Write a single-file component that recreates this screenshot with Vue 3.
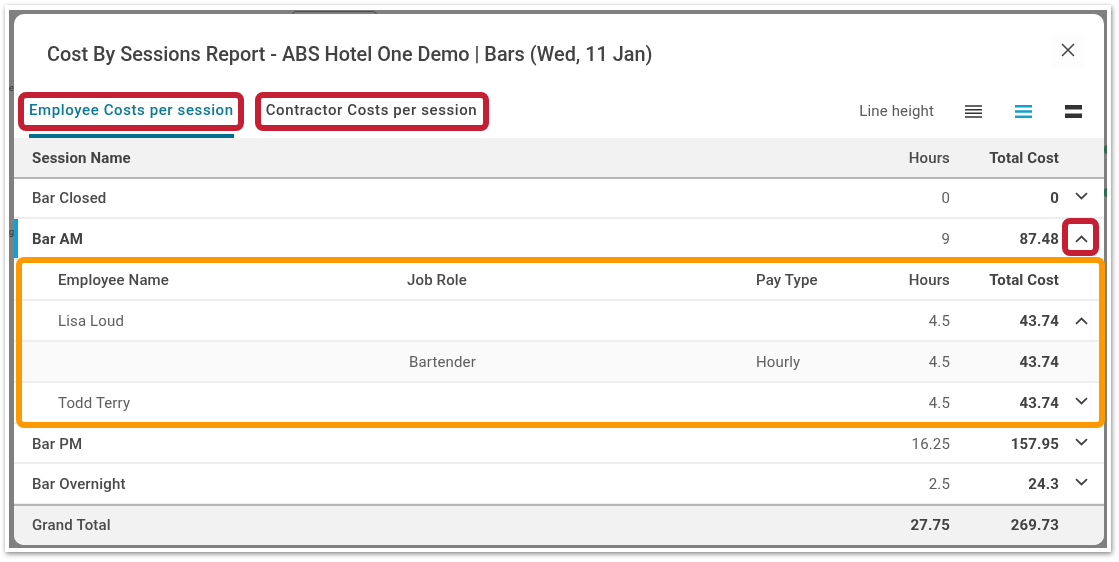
<script setup>
const subRows = [
  { name: 'Lisa Loud', role: '', pay: '', hours: '4.5', cost: '43.74', icon: 'up' },
  { name: '', role: 'Bartender', pay: 'Hourly', hours: '4.5', cost: '43.74', icon: '', shaded: true },
  { name: 'Todd Terry', role: '', pay: '', hours: '4.5', cost: '43.74', icon: 'down' }
]
const after = [
  { name: 'Bar PM', hours: '16.25', cost: '157.95', cls: 'short' },
  { name: 'Bar Overnight', hours: '2.5', cost: '24.3', cls: 'low' }
]
</script>

<template>
  <div class="page">
    <div class="card">
      <div class="shot">
        <div class="backdrop">
          <span class="ghost ghost-e">e</span>
          <span class="ghost ghost-g">g</span>
          <span class="ghost-pill"></span>
          <span class="arc arc-a"></span>
          <span class="arc arc-b"></span>
          <section class="modal">
            <header class="head">
              <h1>Cost By Sessions Report - ABS Hotel One Demo | Bars (Wed, 11 Jan)</h1>
              <button class="close" aria-label="Close">
                <svg width="14" height="14" viewBox="0 0 14 14"><path d="M1 1 13 13M13 1 1 13" stroke="#424242" stroke-width="1.5" fill="none"/></svg>
              </button>
            </header>

            <div class="tabs">
              <div class="tab active">Employee Costs per session</div>
              <div class="tab">Contractor Costs per session</div>
              <div class="line-height">
                <span class="lh-label">Line height</span>
                <svg width="17" height="13" viewBox="0 0 17 13"><path d="M0 1h17M0 4.700h17M0 8.300h17M0 12h17" stroke="#333" stroke-width="1.500"/></svg>
                <svg width="17" height="13" viewBox="0 0 17 13"><path d="M0 1.300h17M0 6.500h17M0 11.700h17" stroke="#12a0d2" stroke-width="2.600"/></svg>
                <svg width="17" height="13" viewBox="0 0 17 13"><path d="M0 2.200h17M0 10.800h17" stroke="#333" stroke-width="4.400"/></svg>
              </div>
            </div>

            <div class="row main head-row">
              <span class="strong">Session Name</span>
              <span class="num medium">Hours</span>
              <span class="num strong">Total Cost</span>
              <span></span>
            </div>

            <div class="row main first">
              <span class="medium">Bar Closed</span>
              <span class="num light">0</span>
              <span class="num strong">0</span>
              <svg class="chev" viewBox="0 0 13 8"><path d="M1 1.200 6.500 6.500 12 1.200" /></svg>
            </div>

            <div class="row main open">
              <span class="strong">Bar AM</span>
              <span class="num light">9</span>
              <span class="num strong">87.48</span>
              <svg class="chev up" viewBox="0 0 13 8"><path d="M1 6.800 6.500 1.500 12 6.800" /></svg>
            </div>

            <div class="row sub">
              <span class="medium">Employee Name</span>
              <span class="medium">Job Role</span>
              <span class="medium">Pay Type</span>
              <span class="num medium">Hours</span>
              <span class="num strong">Total Cost</span>
              <span></span>
            </div>

            <div v-for="(r, i) in subRows" :key="i" class="row sub" :class="{ shaded: r.shaded }">
              <span class="light">{{ r.name }}</span>
              <span class="light role">{{ r.role }}</span>
              <span class="light">{{ r.pay }}</span>
              <span class="num light">{{ r.hours }}</span>
              <span class="num strong">{{ r.cost }}</span>
              <svg v-if="r.icon === 'up'" class="chev up" viewBox="0 0 13 8"><path d="M1 6.800 6.500 1.500 12 6.800" /></svg>
              <svg v-else-if="r.icon === 'down'" class="chev" viewBox="0 0 13 8"><path d="M1 1.200 6.500 6.500 12 1.200" /></svg>
              <span v-else></span>
            </div>

            <div v-for="r in after" :key="r.name" class="row main" :class="r.cls">
              <span class="medium">{{ r.name }}</span>
              <span class="num light">{{ r.hours }}</span>
              <span class="num strong">{{ r.cost }}</span>
              <svg class="chev" viewBox="0 0 13 8"><path d="M1 1.200 6.500 6.500 12 1.200" /></svg>
            </div>

            <div class="row main total">
              <span class="medium">Grand Total</span>
              <span class="num strong">27.75</span>
              <span class="num strong">269.73</span>
              <span></span>
            </div>
          </section>
        </div>
        <i class="mark red mark-tab1"></i>
        <i class="mark red mark-tab2"></i>
        <i class="mark red mark-chev"></i>
        <i class="mark orange mark-sub"></i>
      </div>
    </div>
  </div>
</template>

<style>
html, body { margin: 0; background: #fff; }
</style>

<style scoped>
.page {
  width: 1119px;
  height: 562px;
  overflow: hidden;
  box-sizing: border-box;
  padding: 5px 0 0 5px;
  font-family: Roboto, "Liberation Sans", sans-serif;
  color: #424242;
}
.card {
  width: 1106px;
  height: 547px;
  box-sizing: border-box;
  padding: 5px 4px 4px;
  background: #fff;
  box-shadow: 1px 2px 5px rgba(0, 0, 0, .45), 0 0 3px rgba(0, 0, 0, .08);
  filter: blur(.35px);
}
.shot { position: relative; width: 1098px; height: 538px; }
.backdrop {
  position: relative;
  height: 100%;
  box-sizing: border-box;
  padding: 4px 3px 3px 5px;
  background: #808080;
  overflow: hidden;
}
.ghost { position: absolute; left: 0; font-size: 9px; line-height: 10px; color: #303030; }
.ghost-e { top: 73px; }
.ghost-g { top: 217px; }
.ghost-pill {
  position: absolute; left: 283px; top: 1px; width: 85px; height: 6px;
  border: 1px solid #4c4c4c; border-radius: 4px 4px 0 0; box-sizing: border-box;
}
.arc { position: absolute; right: 0; width: 3px; height: 9px; background: #2f6b4c; border-radius: 3px 0 0 3px; }
.arc-a { top: 135px; }
.arc-b { top: 178px; }
.modal {
  position: relative;
  height: 531px;
  background: #fff;
  border-radius: 10px;
  overflow: hidden;
}
.head {
  height: 78px;
  display: flex;
  align-items: center;
  justify-content: space-between;
  padding: 0 19px 0 33px;
  box-sizing: border-box;
}
h1 { margin: 0; font-size: 19.85px; font-weight: 500; line-height: 24px; color: #424242; position: relative; top: 2px; }
.close {
  width: 34px; height: 34px; padding: 0; border: 0; background: #fdfdfd; border-radius: 4px;
  display: flex; align-items: center; justify-content: center; margin-bottom: 6px;
}
.tabs { height: 46px; display: flex; padding-left: 15px; }
.tab {
  height: 46px;
  box-sizing: border-box;
  padding-top: 8px;
  margin-right: 32px;
  font-size: 15px;
  font-weight: 500;
  line-height: 20px;
  letter-spacing: .6px;
  white-space: nowrap;
  border-bottom: 4px solid transparent;
}
.tab.active { color: #0c7a96; border-bottom-color: #006f8e; }
.line-height { margin-left: auto; display: flex; align-items: center; height: 38px; padding-right: 22px; gap: 33px; }
.lh-label { font-size: 15px; letter-spacing: .15px; color: #5a5a5a; margin-right: -2px; }
.row {
  display: grid; align-items: center; height: 41px; box-sizing: border-box;
  font-size: 15px; letter-spacing: .15px; border-bottom: 2px solid #eeeeee;
}
.main { grid-template-columns: 1fr 90px 109px 45px; padding-left: 18px; }
.sub { grid-template-columns: 349px 349px 1fr 60px 109px 45px; padding-left: 44px; }
.head-row { background: #f2f2f2; border-bottom: 2px solid #b5b5b5; }
.first { height: 40px; padding-bottom: 1px; }
.short { height: 40px; padding-top: 1px; }
.low { padding-top: 1px; }
.open { box-shadow: inset 4px 0 0 #12a0d2; }
.shaded { background: #fafafa; }
.total { background: #f2f2f2; border-top: 2px solid #b5b5b5; border-bottom: 0; margin-top: -1px; height: 41px; padding-bottom: 1px; }
.num { text-align: right; }
.strong { font-weight: 700; color: #424242; }
.medium { font-weight: 500; color: #4a4a4a; }
.light { color: #5f5f5f; }
.role { padding-left: 2px; }
.chev { width: 13px; height: 8px; justify-self: center; margin: 0 0 4px 0; }
.chev.up { margin-bottom: 0; }
.chev path { fill: none; stroke: #424242; stroke-width: 1.800; }
.mark { position: absolute; box-sizing: border-box; border-style: solid; border-width: 6px; pointer-events: none; }
.red { border-color: #c41f33; border-radius: 8px; }
.orange { border-color: #ff9900; border-radius: 8px; }
.mark-tab1 { left: 9px; top: 82px; width: 226px; height: 39px; }
.mark-tab2 { left: 246px; top: 82px; width: 234px; height: 39px; }
.mark-chev { left: 1053px; top: 208px; width: 37px; height: 38px; }
.mark-sub { left: 7px; top: 247px; width: 1089px; height: 171px; }
</style>
